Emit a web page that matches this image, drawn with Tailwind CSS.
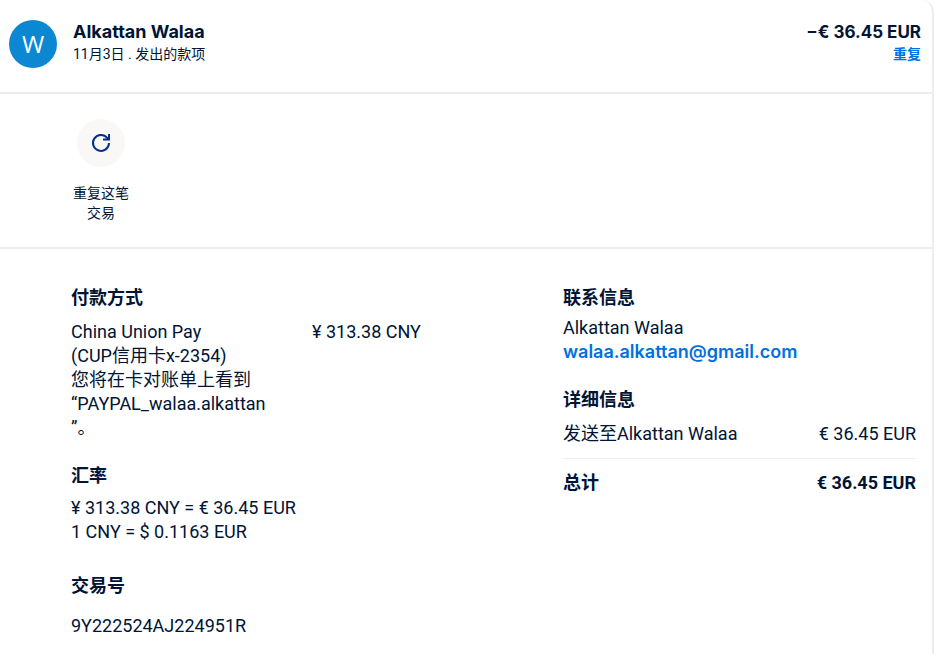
<!DOCTYPE html>
<html lang="zh-CN">
<head>
  <meta charset="UTF-8" />
  <meta name="viewport" content="width=device-width, initial-scale=1.0" />
  <title>Alkattan Walaa</title>
  <script src="https://cdn.jsdelivr.net/npm/@tailwindcss/browser@4"></script>
</head>
<body class="bg-white pr-px font-['Roboto','Noto_Sans_CJK_SC',sans-serif] text-lg leading-6 text-[#001435]">
  <main class="min-h-screen rounded-tr-xl border-r-2 border-[#ededed]">

    <!-- Header -->
    <header class="flex items-start gap-4 border-b-2 border-[#ededeb] pt-5 pr-[11px] pb-6 pl-[9px]">
      <div class="flex size-12 shrink-0 items-center justify-center rounded-full bg-[#0c88d2] font-['Open_Sans',sans-serif] text-2xl text-white">W</div>
      <div class="flex-1">
        <h1 class="font-['Inter',sans-serif] font-bold">Alkattan Walaa</h1>
        <p class="text-sm leading-5">11月3日 . 发出的款项</p>
      </div>
      <div class="text-right">
        <p class="font-['Inter',sans-serif] text-[17px] leading-6 font-bold">−€ 36.45 EUR</p>
        <a href="#" class="block text-sm leading-5 font-bold text-[#0070e0]">重复</a>
      </div>
    </header>

    <!-- Actions -->
    <section class="border-b-2 border-[#ededeb] pt-[25px] pb-6 pl-[73px]">
      <button class="flex w-14 flex-col items-center gap-4 text-sm leading-5">
        <span class="flex size-12 items-center justify-center rounded-full bg-[#f9f8f6]">
          <svg class="size-6" viewBox="0 0 24 24" fill="none" stroke="#003087" stroke-width="2" aria-hidden="true">
            <path d="M20 12A8 8 0 1 1 18.300 7L20 8.500" />
            <path d="M20 3v5.500h-6" />
          </svg>
        </span>
        <span>重复这笔交易</span>
      </button>
    </section>

    <!-- Details -->
    <div class="grid grid-cols-[minmax(0,492fr)_minmax(0,353fr)] pt-[37px] pr-4 pb-4 pl-[71px]">
      <div>
        <h2 class="font-bold">付款方式</h2>
        <div class="mt-2.5 flex">
          <p class="w-[241px]">China Union Pay<br>(CUP信用卡x-2354)<br>您将在卡对账单上看到<br>“PAYPAL_walaa.alkattan<br>”。</p>
          <p>¥ 313.38 CNY</p>
        </div>
        <h2 class="mt-6 font-bold">汇率</h2>
        <p class="mt-2">¥ 313.38 CNY = € 36.45 EUR<br>1 CNY = $ 0.1163 EUR</p>
        <h2 class="mt-[30px] font-bold">交易号</h2>
        <p class="mt-4">9Y222524AJ224951R</p>
      </div>

      <div>
        <h2 class="font-bold">联系信息</h2>
        <p class="mt-1.5">Alkattan Walaa</p>
        <a href="#" class="block font-['Inter',sans-serif] font-semibold text-[#0070e0]">walaa.alkattan@gmail.com</a>
        <h2 class="mt-6 font-bold">详细信息</h2>
        <div class="mt-2.5 flex justify-between border-b border-[#ededeb] pb-3">
          <p>发送至Alkattan Walaa</p>
          <p>€ 36.45 EUR</p>
        </div>
        <div class="flex justify-between pt-3 font-bold">
          <p>总计</p>
          <p>€ 36.45 EUR</p>
        </div>
      </div>
    </div>

  </main>
</body>
</html>
